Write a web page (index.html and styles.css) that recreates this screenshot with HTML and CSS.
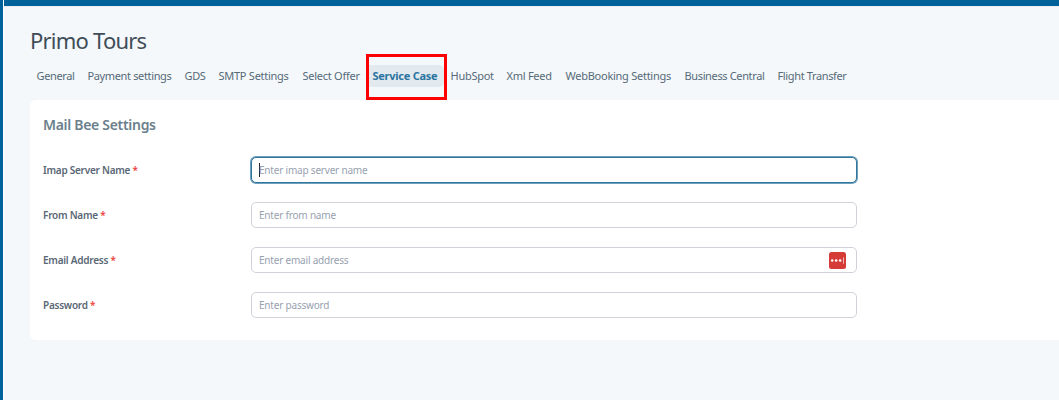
FILE: index.html
```html
<!DOCTYPE html>
<html lang="en">
<head>
<meta charset="utf-8">
<title>Primo Tours</title>
<link rel="stylesheet" href="styles.css">
</head>
<body>
<div class="app">
  <div class="rail"></div>
  <main class="page">
    <h1 class="title">Primo Tours</h1>
    <nav class="tabs">
      <a class="tab tight">General</a>
      <a class="tab tight">Payment settings</a>
      <a class="tab tight">GDS</a>
      <a class="tab">SMTP Settings</a>
      <a class="tab">Select Offer</a>
      <a class="tab active">Service Case<span class="highlight"></span></a>
      <a class="tab">HubSpot</a>
      <a class="tab">Xml Feed</a>
      <a class="tab">WebBooking Settings</a>
      <a class="tab tight">Business Central</a>
      <a class="tab tight">Flight Transfer</a>
    </nav>
    <section class="card">
      <h2 class="heading">Mail Bee Settings</h2>
      <div class="row"><div class="label">Imap Server Name <b class="req">*</b></div><div class="field focused"><span class="caret"></span><span class="hint">Enter imap server name</span></div></div>
      <div class="row"><div class="label">From Name <b class="req">*</b></div><div class="field"><span class="hint">Enter from name</span></div></div>
      <div class="row"><div class="label">Email Address <b class="req">*</b></div><div class="field"><span class="hint">Enter email address</span>
        <svg class="manager" width="17" height="17" viewBox="0 0 17 17"><rect width="17" height="17" rx="2.5" fill="#d53c38"/><circle cx="3.2" cy="8.5" r="1.3" fill="#fff"/><circle cx="7.2" cy="8.5" r="1.3" fill="#fff"/><circle cx="11.2" cy="8.5" r="1.3" fill="#fff"/><path d="M14.5 5.3v6.4" stroke="#f3b5b3" stroke-width="1"/></svg></div></div>
      <div class="row"><div class="label">Password <b class="req">*</b></div><div class="field"><span class="hint">Enter password</span></div></div>
    </section>
  </main>
</div>
</body>
</html>
```

FILE: styles.css
```css
* { box-sizing: border-box; }
body { margin: 0; background: #f4f8fb; font-family: "Noto Sans", "Open Sans", sans-serif; overflow: hidden; }
.app { display: flex; height: 400px; }
.rail { flex: none; width: 4px; background: #00629b; border-right: 1px solid #fff; }
.page { flex: 1; min-width: 0; border-top: 6px solid #00629b; padding: 19px 0 0 26px; box-shadow: inset 0 1px #eeedf5; }
.title { margin: 0; height: 31px; font-size: 22px; font-weight: 400; line-height: 31px; color: #3f4d59; letter-spacing: -0.78px; }
.tabs { display: grid; grid-template-columns: 51px 97px 34px 84px 70px 78px 56px 59px 119px 93px 85px; height: 22px; margin-top: 9px; }
.tab { position: relative; padding: 0 6.5px; font-size: 11px; line-height: 22px; color: #566a78; white-space: nowrap; letter-spacing: -0.26px; }
.tight { letter-spacing: -0.36px; }
.active { background: #e2eaf0; border-radius: 5px; color: #2b749f; font-weight: 700; }
.highlight { position: absolute; left: 0; top: -11px; width: 81px; height: 46px; border: 3px solid #f00; }
.card { height: 240px; margin-top: 13px; padding: 13px 13px; background: #fff; border-radius: 6px 0 0 6px; }
.heading { margin: 0 0 20px; font-size: 14px; line-height: 24px; font-weight: 600; color: #6b7f8c; letter-spacing: -0.3px; }
.row { display: flex; height: 26px; margin-bottom: 19px; align-items: center; }
.label { width: 208px; font-size: 10px; font-weight: 600; color: #596775; white-space: nowrap; letter-spacing: -0.25px; }
.req { color: #f0443e; font-weight: 600; }
.field { display: flex; align-items: center; width: 606px; height: 26px; padding: 0 10px 0 7px; border: 1px solid #cfd2da; border-radius: 5px; background: #fff; font-size: 10px; color: #98a1b0; letter-spacing: -0.2px; }
.focused { border-color: #2f759c; box-shadow: 0 0 0 1px #70a1bc; }
.caret { width: 1px; height: 14px; margin-right: -1px; background: #222; }
.manager { margin-left: auto; }
```
